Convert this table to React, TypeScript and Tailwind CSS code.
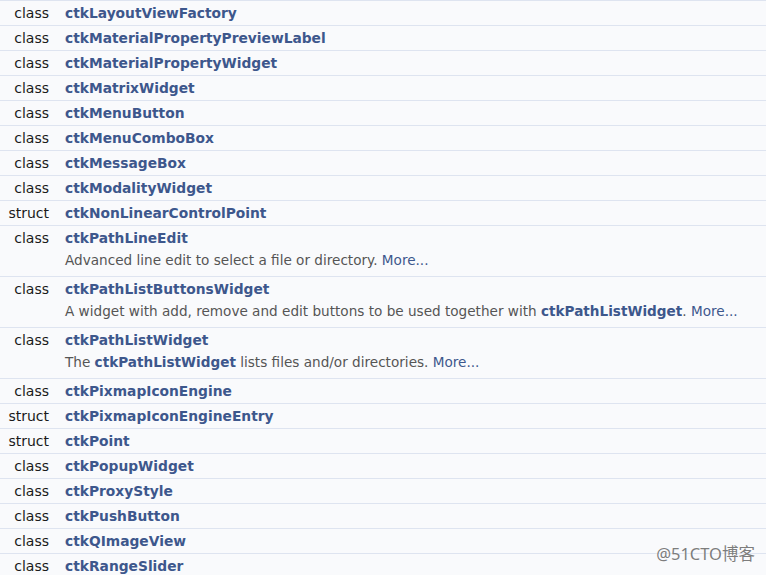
import React from "react";

type Item = {
  kind: "class" | "struct";
  name: string;
  desc?: React.ReactNode;
};

const More = () => <span className="text-[#3D578C]">More...</span>;

const items: Item[] = [
  { kind: "class", name: "ctkLayoutViewFactory" },
  { kind: "class", name: "ctkMaterialPropertyPreviewLabel" },
  { kind: "class", name: "ctkMaterialPropertyWidget" },
  { kind: "class", name: "ctkMatrixWidget" },
  { kind: "class", name: "ctkMenuButton" },
  { kind: "class", name: "ctkMenuComboBox" },
  { kind: "class", name: "ctkMessageBox" },
  { kind: "class", name: "ctkModalityWidget" },
  { kind: "struct", name: "ctkNonLinearControlPoint" },
  {
    kind: "class",
    name: "ctkPathLineEdit",
    desc: (
      <>
        Advanced line edit to select a file or directory. <More />
      </>
    ),
  },
  {
    kind: "class",
    name: "ctkPathListButtonsWidget",
    desc: (
      <>
        A widget with add, remove and edit buttons to be used together with{" "}
        <span className="font-bold text-[#3D578C]">ctkPathListWidget</span>.{" "}
        <More />
      </>
    ),
  },
  {
    kind: "class",
    name: "ctkPathListWidget",
    desc: (
      <>
        The <span className="font-bold text-[#3D578C]">ctkPathListWidget</span>{" "}
        lists files and/or directories. <More />
      </>
    ),
  },
  { kind: "class", name: "ctkPixmapIconEngine" },
  { kind: "struct", name: "ctkPixmapIconEngineEntry" },
  { kind: "struct", name: "ctkPoint" },
  { kind: "class", name: "ctkPopupWidget" },
  { kind: "class", name: "ctkProxyStyle" },
  { kind: "class", name: "ctkPushButton" },
  { kind: "class", name: "ctkQImageView" },
  { kind: "class", name: "ctkRangeSlider" },
];

const Row = ({ item }: { item: Item }) => (
  <div className="flex bg-[#F9FAFC] border-b border-[#DEE4F0] pt-[3px] pb-[3px] leading-[18px]">
    <div className="w-[49px] shrink-0 text-right text-[#1a1a1a] whitespace-nowrap">
      {item.kind}
    </div>
    <div className="pl-[16px] pr-2 flex-1 min-w-0">
      <div className="font-bold text-[13.8px] text-[#3D578C] whitespace-nowrap">
        {item.name}
      </div>
      {item.desc && (
        <div className="mt-[4px] mb-[4px] text-[13.6px] text-[#555555] whitespace-nowrap">
          {item.desc}
        </div>
      )}
    </div>
  </div>
);

export default function App() {
  return (
    <div
      className="relative w-[766px] h-[575px] overflow-hidden bg-white text-[14px]"
      style={{ fontFamily: '"DejaVu Sans", sans-serif' }}
    >
      <div className="border-t border-[#DEE4F0]">
        {items.map((item) => (
          <Row key={item.name} item={item} />
        ))}
      </div>
      <div
        className="absolute right-[11px] bottom-[8px] text-[16.5px] text-[#7d7d7d] [text-shadow:0_0_2px_#ffffff]"
        style={{ fontFamily: '"Noto Sans", "Noto Sans CJK SC", sans-serif' }}
      >
        @51CTO博客
      </div>
    </div>
  );
}
